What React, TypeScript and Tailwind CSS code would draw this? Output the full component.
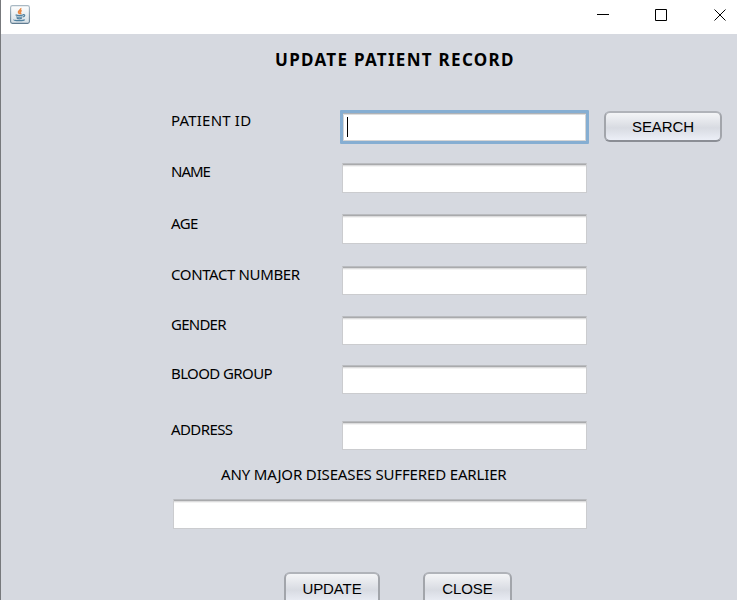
const LABEL = 'block whitespace-nowrap text-[15px] leading-[20px] text-black';

function Field({ className = '' }: { className?: string }) {
  return (
    <div
      className={`border border-[#cbcccf] border-t-[#b9bbbf] bg-white shadow-[inset_0_1px_0_#a9aaac,inset_0_2px_0_#dcdcdd,inset_0_3px_0_#f3f3f3] ${className}`}
    />
  );
}

function Button({ children, className }: { children: string; className: string }) {
  return (
    <button
      className={`rounded-[6px] border-2 border-[#a2a5ab] border-t-[#b0b3b9] border-b-[#8b8e95] bg-linear-to-b from-[#f4f5f7] via-[#d8dbe2] via-55% to-[#eceff7] text-center font-['Liberation_Sans',Arial,sans-serif] text-[15px] leading-[18px] tracking-[-0.1px] text-black ${className}`}
    >
      {children}
    </button>
  );
}

// Each row keeps its own height because the form's rows are unevenly spaced.
const rows = [
  { label: 'NAME', row: 'h-[51px]', text: '-mt-[2px] tracking-[-1px]', field: 'h-[30px]' },
  { label: 'AGE', row: 'h-[52px]', text: '-mt-px tracking-[-0.6px]', field: 'h-[30px]' },
  { label: 'CONTACT NUMBER', row: 'h-[50px]', text: '-mt-[2px] tracking-[-0.38px]', field: 'h-[29px]' },
  { label: 'GENDER', row: 'h-[49px]', text: '-mt-[2px] tracking-[-0.75px]', field: 'h-[29px]' },
  { label: 'BLOOD GROUP', row: 'h-[56px]', text: '-mt-[2px] tracking-[-0.6px]', field: 'h-[29px]' },
  { label: 'ADDRESS', row: 'h-[45px]', text: '-mt-[2px] tracking-[-0.6px]', field: 'h-[29px]' },
];

export default function App() {
  return (
    <div className="flex h-[600px] w-[737px] flex-col overflow-hidden border-l border-[#77797c] bg-[#d6d9e0] font-['Noto_Sans',sans-serif]">
      <header className="flex h-[34px] shrink-0 justify-between bg-white">
        <svg className="mt-[5px] ml-[9px] h-[19px] w-[20px]" viewBox="0 0 20 19" fill="none">
          <defs>
            <linearGradient id="tile" x1="0" y1="0" x2="0" y2="1">
              <stop offset="0" stopColor="#ffffff" />
              <stop offset="1" stopColor="#d5dfe5" />
            </linearGradient>
            <linearGradient id="edge" x1="0" y1="0" x2="0" y2="1">
              <stop offset="0" stopColor="#a9b9c4" />
              <stop offset="1" stopColor="#607b90" />
            </linearGradient>
          </defs>
          <rect x=".6" y=".6" width="18.8" height="17.8" rx="1.8" fill="url(#tile)" stroke="url(#edge)" strokeWidth="1.1" />
          <path d="M10.700 3.100c.8 1.700-2.900 2.600-2.200 4.300.2.600.9 1.200 1.200 1.800M11.700 5.500c-1.700.7-2.100 1.300-1.100 2.400.4.500.1 1-.3 1.300" stroke="#e9853f" strokeWidth="1.5" />
          <path d="M5.600 9.900c2 .7 5.800.6 7.600 0M6.200 11.700c1.700.6 4.700.6 6.300 0M6.800 13.400c1.500.5 3.600.5 5 0M13 9.700c2.500-.5 2 1.800.1 2.200M4 14.600c-.9 1.400 10.200 1.500 10.600-.1" stroke="#51819f" strokeWidth="1.2" />
        </svg>
        <svg className="h-[34px] w-[150px]" viewBox="0 0 150 34" fill="none" stroke="#000">
          <path d="M10 14.500h12" />
          <path d="M68.500 9.500h11v11h-11z" />
          <path d="M127.500 9.500l11 11M138.500 9.500l-11 11" strokeWidth="1" />
        </svg>
      </header>

      <main className="flex grow flex-col pl-[170px]">
        <h1 className="mt-[14px] ml-[104px] h-[24px] whitespace-nowrap text-[17px] leading-[24px] font-bold tracking-[1.3px] text-black">
          UPDATE PATIENT RECORD
        </h1>

        <div className="mt-[38px] flex h-[53px]">
          <span className={`${LABEL} w-[169px] tracking-[0.2px]`}>PATIENT ID</span>
          <div className="h-[34px] w-[249px] rounded-[1px] border-3 border-[#86aed2] bg-white pt-[4px] pl-[4px] shadow-[inset_0_1px_0_#aeb2b7,inset_0_2px_0_#dedede,inset_1px_0_0_#d5d5d5,inset_-1px_-1px_0_#d5d5d5]">
            <div className="h-[20px] w-px bg-black" />
          </div>
          <Button className="mt-px ml-[15px] h-[31px] w-[118px]">SEARCH</Button>
        </div>

        {rows.map((r) => (
          <div key={r.label} className={`flex shrink-0 items-start ${r.row}`}>
            <span className={`${LABEL} w-[171px] ${r.text}`}>{r.label}</span>
            <Field className={`w-[245px] ${r.field}`} />
          </div>
        ))}

        <span className={`${LABEL} -mt-[2px] ml-[50px] h-[35px] tracking-[-0.15px]`}>
          ANY MAJOR DISEASES SUFFERED EARLIER
        </span>
        <Field className="ml-[2px] h-[30px] w-[414px] shrink-0" />

        <div className="mt-[43px] ml-[113px] flex gap-[43px]">
          <Button className="h-[33px] w-[96px]">UPDATE</Button>
          <Button className="h-[33px] w-[89px]">CLOSE</Button>
        </div>
      </main>
    </div>
  );
}
